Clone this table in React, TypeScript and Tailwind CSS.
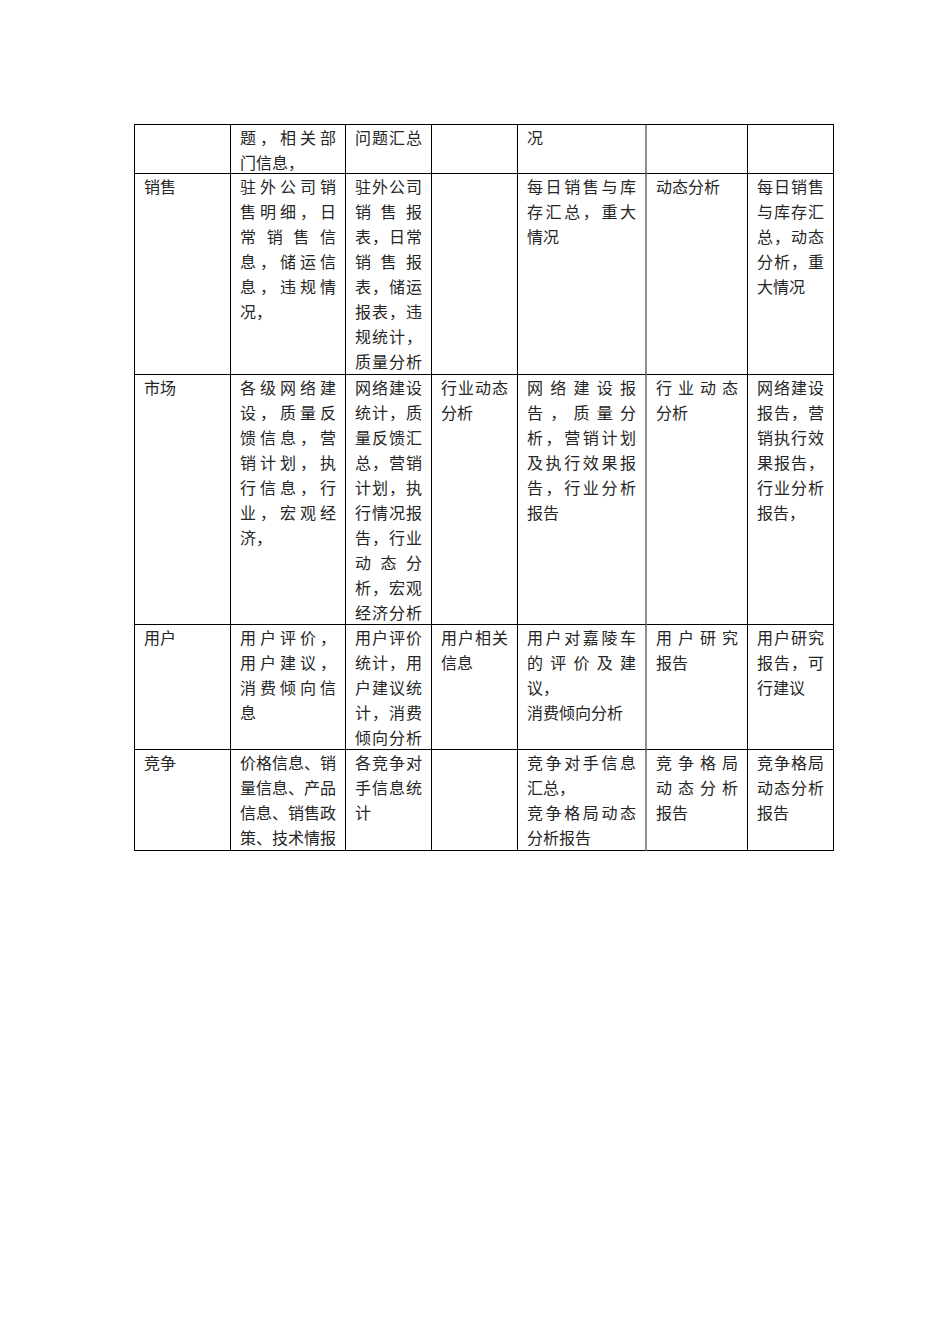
import React from "react";

type Line = { t: string; s: boolean };
const S = (t: string): Line => ({ t, s: true });
const N = (t: string): Line => ({ t, s: false });

const rows: Line[][][] = [
  [
    [],
    [S("题，相关部"), N("门信息，")],
    [S("问题汇总")],
    [],
    [N("况")],
    [],
    [],
  ],
  [
    [N("销售")],
    [S("驻外公司销"), S("售明细，日"), S("常销售信"), S("息，储运信"), S("息，违规情"), N("况，")],
    [S("驻外公司"), S("销售报"), S("表，日常"), S("销售报"), S("表，储运"), S("报表，违"), S("规统计，"), S("质量分析")],
    [],
    [S("每日销售与库"), S("存汇总，重大"), N("情况")],
    [N("动态分析")],
    [S("每日销售"), S("与库存汇"), S("总，动态"), S("分析，重"), N("大情况")],
  ],
  [
    [N("市场")],
    [S("各级网络建"), S("设，质量反"), S("馈信息，营"), S("销计划，执"), S("行信息，行"), S("业，宏观经"), N("济，")],
    [S("网络建设"), S("统计，质"), S("量反馈汇"), S("总，营销"), S("计划，执"), S("行情况报"), S("告，行业"), S("动态分"), S("析，宏观"), S("经济分析")],
    [S("行业动态"), N("分析")],
    [S("网络建设报"), S("告，质量分"), S("析，营销计划"), S("及执行效果报"), S("告，行业分析"), N("报告")],
    [S("行业动态"), N("分析")],
    [S("网络建设"), S("报告，营"), S("销执行效"), S("果报告，"), S("行业分析"), N("报告，")],
  ],
  [
    [N("用户")],
    [S("用户评价，"), S("用户建议，"), S("消费倾向信"), N("息")],
    [S("用户评价"), S("统计，用"), S("户建议统"), S("计，消费"), S("倾向分析")],
    [S("用户相关"), N("信息")],
    [S("用户对嘉陵车"), S("的评价及建"), N("议，"), N("消费倾向分析")],
    [S("用户研究"), N("报告")],
    [S("用户研究"), S("报告，可"), N("行建议")],
  ],
  [
    [N("竞争")],
    [N("价格信息、销"), N("量信息、产品"), N("信息、销售政"), N("策、技术情报")],
    [S("各竞争对"), S("手信息统"), N("计")],
    [],
    [S("竞争对手信息"), N("汇总，"), S("竞争格局动态"), N("分析报告")],
    [S("竞争格局"), S("动态分析"), N("报告")],
    [S("竞争格局"), S("动态分析"), N("报告")],
  ],
];

function LineView({ line }: { line: Line }) {
  if (line.s) {
    return (
      <div className="flex justify-between whitespace-nowrap">
        {Array.from(line.t).map((c, i) => (
          <span key={i}>{c}</span>
        ))}
      </div>
    );
  }
  return <div className="whitespace-nowrap">{line.t}</div>;
}

export default function App() {
  return (
    <div
      className="w-[950px] min-h-[1344px] bg-white text-[#262626]"
      style={{ fontFamily: '"Noto Sans CJK SC", "Noto Sans", sans-serif' }}
    >
      <div className="pt-[124px] pl-[134px]">
        <div className="grid w-fit grid-cols-[96px_115px_86px_86px_129px_101px_86px] grid-rows-[49px_201px_250px_125px_101px] border-t border-l border-black">
          {rows.map((row, ri) =>
            row.map((cell, ci) => (
              <div
                key={`${ri}-${ci}`}
                className={
                  ci === 4
                    ? "border-b border-b-black border-r-2 border-r-[#8f8f8f] px-[9px] text-[16px] leading-[25px] overflow-hidden"
                    : "border-b border-r border-black px-[9px] text-[16px] leading-[25px] overflow-hidden"
                }
              >
                {cell.map((line, li) => (
                  <LineView key={li} line={line} />
                ))}
              </div>
            ))
          )}
        </div>
      </div>
    </div>
  );
}
